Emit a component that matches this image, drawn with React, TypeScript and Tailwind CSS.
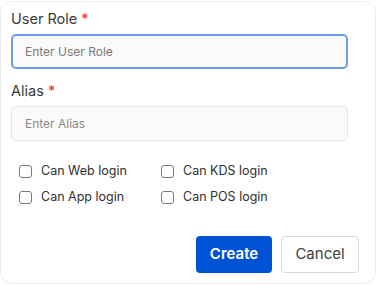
import { useState } from "react";

const permissions = [
  ["Can Web login", "Can KDS login"],
  ["Can App login", "Can POS login"],
];

function Field({ label, placeholder, focused }: { label: string; placeholder: string; focused?: boolean }) {
  return (
    <div className="flex flex-col">
      <label className="text-[14.5px] leading-[20px] text-[#3b3b3b]">
        {label} <span className="text-[#e53935]">*</span>
      </label>
      <input
        autoFocus={focused}
        placeholder={placeholder}
        className={
          focused
            ? "mt-[5px] h-[35px] w-[337px] rounded-[5px] border-2 border-[#6d9de9] bg-[#fafafa] px-[12px] text-[12px] text-[#333] caret-[#1d3fb3] outline-none placeholder:text-[#7a7a7a]"
            : "mt-[5px] h-[35px] w-[337px] rounded-[5px] border border-[#e6e6e6] bg-[#fafafa] px-[13px] text-[12px] text-[#333] outline-none placeholder:text-[#8a8a8a]"
        }
      />
    </div>
  );
}

export default function App() {
  const [checked, setChecked] = useState<Record<string, boolean>>({});

  return (
    <div className="h-[286px] w-[378px] bg-white pt-[1px] pr-[2px]" style={{ fontFamily: "Inter, 'Noto Sans', sans-serif" }}>
      <div className="flex h-[283px] w-[376px] flex-col rounded-[12px] border border-[#eeeeee] bg-white">
        <div className="flex flex-col gap-[12px] border-b border-[#fcfcfc] px-[10px] pt-[7px] pb-[9px]">
          <Field label="User Role" placeholder="Enter User Role" focused />
          <Field label="Alias" placeholder="Enter Alias" />
          <div className="mt-[11px] flex flex-col gap-[12px] pl-[8px]">
            {permissions.map((row) => (
              <div key={row[0]} className="flex">
                {row.map((p) => (
                  <label key={p} className="flex w-[142px] items-center gap-[9px] text-[12.5px] leading-[14px] text-[#2f2f2f]">
                    <input
                      type="checkbox"
                      checked={!!checked[p]}
                      onChange={() => setChecked({ ...checked, [p]: !checked[p] })}
                      className="h-[13px] w-[13px] appearance-none rounded-[3px] border border-[#7a7a7a] bg-white"
                    />
                    {p}
                  </label>
                ))}
              </div>
            ))}
          </div>
        </div>
        <div className="flex flex-1 items-center justify-end gap-[9px] pr-[16px] pt-[12px]">
          <button type="button" className="h-[37px] w-[76px] rounded-[4px] bg-[#0052d5] text-[15px] font-semibold text-white">
            Create
          </button>
          <button type="button" className="h-[37px] w-[78px] rounded-[4px] border border-[#d9d9d9] bg-white text-[15px] text-[#404040]">
            Cancel
          </button>
        </div>
      </div>
    </div>
  );
}
